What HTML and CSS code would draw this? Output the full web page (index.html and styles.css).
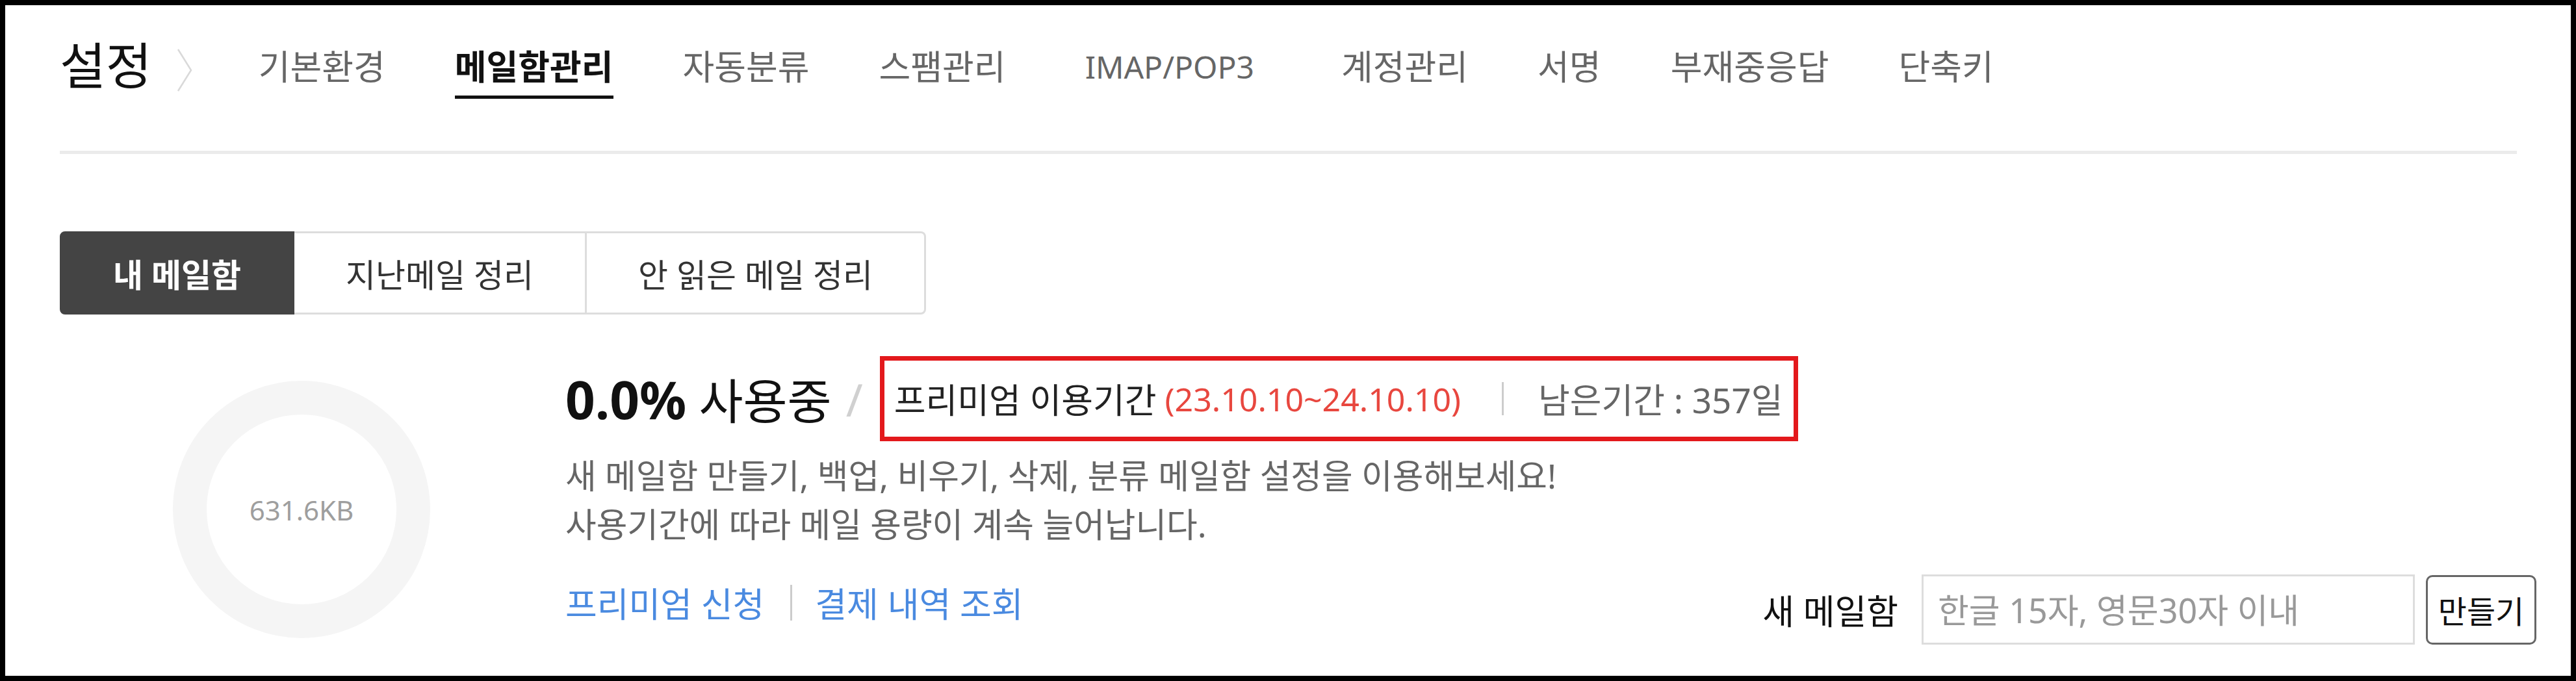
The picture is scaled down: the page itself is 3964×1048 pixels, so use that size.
FILE: index.html
```html
<!DOCTYPE html>
<html lang="ko">
<head>
<meta charset="utf-8">
<title>설정 - 메일함관리</title>
<link rel="stylesheet" href="styles.css">
</head>
<body>
<div class="frame">
  <div class="page">
    <header class="head">
      <h1 class="title">설정</h1>
      <svg class="crumb-arrow" viewBox="0 0 24 66" aria-hidden="true">
        <polyline points="2,1 22,33 2,65" fill="none" stroke="#d9d9d9" stroke-width="2.5"/>
      </svg>
      <nav class="menu">
        <a class="menu-item" href="#">기본환경</a>
        <a class="menu-item is-active" href="#">메일함관리</a>
        <a class="menu-item" href="#">자동분류</a>
        <a class="menu-item" href="#">스팸관리</a>
        <a class="menu-item menu-item--latin" href="#">IMAP/POP3</a>
        <a class="menu-item" href="#">계정관리</a>
        <a class="menu-item" href="#">서명</a>
        <a class="menu-item" href="#">부재중응답</a>
        <a class="menu-item" href="#">단축키</a>
      </nav>
    </header>
    <div class="divider"></div>

    <div class="tabs">
      <a class="tab is-active" href="#">내 메일함</a>
      <a class="tab" href="#">지난메일 정리</a>
      <a class="tab" href="#">안 읽은 메일 정리</a>
    </div>

    <section class="quota">
      <div class="donut"><span class="donut-label">631.6KB</span></div>
      <div class="info">
        <div class="usage-row">
          <div class="usage"><span class="usage-pct">0.0%</span> 사용중</div>
          <span class="slash">/</span>
          <div class="premium">
            <span class="premium-title">프리미엄 이용기간</span>
            <span class="premium-period">&nbsp;(23.10.10~24.10.10)</span>
            <span class="premium-sep"></span>
            <span class="premium-left">남은기간 : 357일</span>
          </div>
        </div>
        <p class="desc">새 메일함 만들기, 백업, 비우기, 삭제, 분류 메일함 설정을 이용해보세요!<br>사용기간에 따라 메일 용량이 계속 늘어납니다.</p>
        <div class="actions">
          <div class="links">
            <a class="link" href="#">프리미엄 신청</a>
            <span class="link-sep"></span>
            <a class="link" href="#">결제 내역 조회</a>
          </div>
          <form class="new-box" onsubmit="return false">
            <label class="new-label" for="newbox">새 메일함</label>
            <input class="new-input" id="newbox" type="text" placeholder="한글 15자, 영문30자 이내">
            <button class="new-btn" type="button">만들기</button>
          </form>
        </div>
      </div>
    </section>
  </div>
</div>
</body>
</html>
```

FILE: styles.css
```css
* { box-sizing: border-box; }
html, body { margin: 0; padding: 0; }
body {
  font-family: "Noto Sans", "Noto Sans CJK KR", sans-serif;
  color: #222;
  background: #fff;
}
.frame {
  height: 1048px;
  border: 8px solid #000;
  background: #fff;
  overflow: hidden;
}
.page { padding: 0 53px 0 84px; }

/* header */
.head {
  display: flex;
  align-items: flex-start;
  height: 224px;
}
.title {
  margin: 48px 0 0;
  font-size: 77px;
  line-height: 90px;
  font-weight: 400;
  color: #111;
}
.crumb-arrow {
  flex: none;
  width: 24px;
  height: 66px;
  margin: 67px 0 0 38px;
}
.menu {
  display: flex;
  gap: 107px;
  margin: 65px 0 0 102px;
}
.menu-item {
  display: block;
  font-size: 53px;
  line-height: 60px;
  padding-bottom: 14px;
  border-bottom: 5px solid transparent;
  color: #666;
  text-decoration: none;
  white-space: nowrap;
}
.menu-item--latin {
  font-size: 48px;
  margin: 0 27px 0 15px;
}
.menu-item.is-active {
  color: #111;
  font-weight: 700;
  border-bottom-color: #111;
}
.divider {
  height: 5px;
  background: #ebebeb;
  margin-right: 30px;
}

/* tabs */
.tabs {
  display: flex;
  width: max-content;
  margin-top: 119px;
}
.tab {
  display: flex;
  align-items: center;
  height: 128px;
  padding: 0 79px;
  font-size: 50px;
  color: #333;
  text-decoration: none;
  background: #fff;
  border: 3px solid #ddd;
  border-left: 0;
}
.tab:first-child { border-left: 3px solid #ddd; border-radius: 8px 0 0 8px; }
.tab:last-child { border-radius: 0 8px 8px 0; }
.tab.is-active {
  background: #444;
  border-color: #444;
  color: #fff;
  font-weight: 700;
}

/* quota */
.quota {
  display: flex;
  align-items: flex-start;
  margin-top: 64px;
}
.donut {
  flex: none;
  width: 396px;
  height: 396px;
  margin: 38px 0 0 174px;
  border-radius: 50%;
  border: 52px solid #f5f5f5;
  display: flex;
  align-items: center;
  justify-content: center;
}
.donut-label {
  font-size: 42px;
  color: #9e9e9e;
}
.info {
  flex: 1;
  margin-left: 208px;
}
.usage-row {
  display: flex;
  align-items: center;
}
.usage {
  font-size: 74px;
  line-height: 1;
  color: #111;
  white-space: nowrap;
}
.usage-pct {
  font-size: 80px;
  font-weight: 700;
}
.slash {
  font-size: 70px;
  line-height: 1;
  color: #d0d0d0;
  margin: 0 26px 0 22px;
}
.premium {
  display: flex;
  align-items: center;
  height: 131px;
  border: 7px solid #e3191c;
  padding: 0 16px 0 15px;
  font-size: 53px;
  white-space: nowrap;
}
.premium-title { color: #222; }
.premium-period { color: #e8473f; font-size: 50px; }
.premium-sep {
  width: 3px;
  height: 51px;
  background: #ccc;
  margin: 0 53px 0 63px;
}
.premium-left { color: #666; }

.desc {
  margin: 16px 0 0;
  font-size: 51.8px;
  line-height: 75px;
  color: #666;
}
.actions {
  display: flex;
  align-items: center;
  justify-content: space-between;
  margin-top: 39px;
}
.links {
  display: flex;
  align-items: center;
  font-size: 53px;
  padding-bottom: 22px;
}
.link {
  color: #4a8ae0;
  text-decoration: none;
}
.link-sep {
  width: 3px;
  height: 55px;
  background: #ccc;
  margin: 0 35px 0 40px;
}
.new-box {
  display: flex;
  align-items: center;
  margin: 0;
}
.new-label {
  font-size: 53px;
  color: #111;
  margin-right: 36px;
}
.new-input {
  width: 759px;
  height: 108px;
  border: 3px solid #ddd;
  border-radius: 0;
  padding: 0 22px;
  font-family: "Noto Sans", "Noto Sans CJK KR", sans-serif;
  font-size: 52px;
  color: #333;
  outline: none;
}
.new-input::placeholder { color: #999; }
.new-btn {
  margin-left: 17px;
  width: 170px;
  height: 107px;
  border: 3px solid #666;
  border-radius: 10px;
  background: #fff;
  font-family: "Noto Sans", "Noto Sans CJK KR", sans-serif;
  font-size: 48px;
  color: #111;
  padding: 0;
}
```
